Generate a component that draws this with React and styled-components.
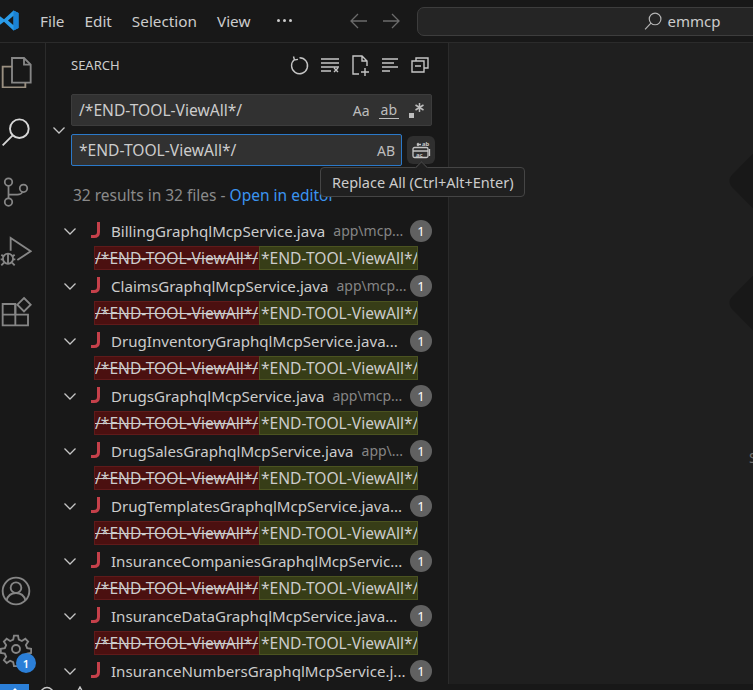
import React from "react";
import styled, { createGlobalStyle } from "styled-components";

const files = [
  { name: "BillingGraphqlMcpService.java", path: "app\\mcp..." },
  { name: "ClaimsGraphqlMcpService.java", path: "app\\mcp..." },
  { name: "DrugInventoryGraphqlMcpService.java..." },
  { name: "DrugsGraphqlMcpService.java", path: "app\\mcp..." },
  { name: "DrugSalesGraphqlMcpService.java", path: "app\\..." },
  { name: "DrugTemplatesGraphqlMcpService.java..." },
  { name: "InsuranceCompaniesGraphqlMcpServic..." },
  { name: "InsuranceDataGraphqlMcpService.java..." },
  { name: "InsuranceNumbersGraphqlMcpService.j..." },
];

const Global = createGlobalStyle`
  html, body {
    margin: 0;
    height: 100%;
    background: #181818;
  }
  #root {
    height: 100%;
  }
  * {
    box-sizing: border-box;
  }
`;

const Window = styled.div`
  height: 690px;
  display: flex;
  flex-direction: column;
  overflow: hidden;
  color: #cccccc;
  font-family: "Noto Sans", "Open Sans", sans-serif;
  font-size: 14px;
`;

const TitleBar = styled.div`
  height: 43px;
  flex-shrink: 0;
  display: flex;
  align-items: center;
  background: #181818;
  border-bottom: 1px solid #2b2b2b;

  & > * {
    flex-shrink: 0;
  }
`;

const Logo = styled.svg`
  width: 19px;
  height: 21px;
  margin-right: 21px;
  margin-top: -1px;
`;

const Menu = styled.div`
  font-size: 15.3px;
  margin-right: ${(p) => p.$gap}px;
`;

const MoreDots = styled.div`
  display: flex;
  gap: 3px;
  margin-right: 57px;
  margin-top: -2px;

  span {
    width: 3px;
    height: 3px;
    border-radius: 50%;
    background: #cccccc;
  }
`;

const NavIcon = styled.svg`
  width: 20px;
  height: 20px;
  margin-right: 12px;
  stroke: #6b6b6b;
  fill: none;
  stroke-width: 1.3;
`;

const CommandBox = styled.div`
  width: 528px;
  height: 29px;
  margin-left: 4px;
  display: flex;
  align-items: center;
  justify-content: center;
  gap: 5px;
  background: #252525;
  border: 1px solid #3d3d3d;
  border-radius: 7px;
  font-size: 15px;
`;

const Main = styled.div`
  flex: 1;
  min-height: 0;
  display: flex;
`;

const ActivityBar = styled.div`
  width: 46px;
  flex-shrink: 0;
  display: flex;
  flex-direction: column;
  justify-content: space-between;
  background: #181818;
  border-right: 1px solid #2b2b2b;
  padding: 0 0 6px;
`;

const ActivityGroup = styled.div`
  display: flex;
  flex-direction: column;
  margin-top: ${(p) => p.$offset || 0}px;
`;

const ActivityItem = styled.div`
  position: relative;
  width: 32px;
  height: ${(p) => p.$h || 60}px;
  display: flex;
  align-items: center;
  justify-content: center;
  color: ${(p) => (p.$active ? "#d7d7d7" : "#868686")};
`;

const Badge = styled.span`
  position: absolute;
  left: 16px;
  bottom: 5px;
  width: 20px;
  height: 20px;
  border-radius: 50%;
  background: #2b7fd8;
  color: #ffffff;
  font-size: 11px;
  font-weight: 600;
  display: flex;
  align-items: center;
  justify-content: center;
`;

const Sidebar = styled.div`
  width: 403px;
  flex-shrink: 0;
  position: relative;
  z-index: 1;
  display: flex;
  flex-direction: column;
  background: #181818;
  border-right: 1px solid #2b2b2b;
`;

const Header = styled.div`
  height: 44px;
  display: flex;
  align-items: center;
  padding: 0 17px 0 25px;
`;

const Title = styled.div`
  flex: 1;
  font-size: 13px;
`;

const HeaderActions = styled.div`
  display: flex;
  align-items: center;
  gap: 8px;
`;

const ActionIcon = styled.svg`
  width: 22px;
  height: 22px;
  fill: none;
  stroke: #c5c5c5;
  stroke-width: 1.4;
`;

const Form = styled.div`
  margin-top: 7px;
  display: flex;
`;

const Toggle = styled.div`
  width: 25px;
  display: flex;
  align-items: center;
  justify-content: center;
  padding-left: 1px;
`;

const Chevron = styled.svg`
  width: 14px;
  height: 14px;
  flex-shrink: 0;
  fill: none;
  stroke: #c5c5c5;
  stroke-width: 1.3;
`;

const Inputs = styled.div`
  display: flex;
  flex-direction: column;
  gap: 8px;
`;

const InputRow = styled.div`
  display: flex;
  align-items: center;
  gap: 5px;
`;

const Field = styled.div`
  width: ${(p) => p.$w}px;
  height: 32px;
  display: flex;
  align-items: center;
  padding: 0 5px 0 7px;
  background: #313131;
  border: 1px solid ${(p) => (p.$focus ? "#2b79c9" : "#3c3c3c")};
  border-radius: 2px;
`;

const FieldText = styled.div`
  flex: 1;
  font-size: 15.6px;
`;

const FieldOption = styled.span`
  font-size: 14px;
  color: #bdbdbd;
  margin-left: ${(p) => p.$gap || 0}px;
  margin-right: ${(p) => p.$right || 0}px;
  padding: ${(p) => (p.$under ? "0 2px" : "0")};
  line-height: ${(p) => (p.$under ? "16px" : "normal")};
  border-bottom: ${(p) => (p.$under ? "1.5px solid #bdbdbd" : "none")};
`;

const RegexIcon = styled.svg`
  width: 17px;
  height: 17px;
  margin-left: 9px;
  margin-right: 1px;
  fill: none;
  stroke: #bdbdbd;
  stroke-width: 1.5;
`;

const ReplaceButton = styled.div`
  width: 28px;
  height: 28px;
  display: flex;
  align-items: center;
  justify-content: center;
  background: #2f2f2f;
  border-radius: 6px;
`;

const Results = styled.div`
  margin: 18px 0 0 27px;
  height: 24px;
  font-size: 15.5px;
  color: #8a8a8a;
  white-space: nowrap;
`;

const Link = styled.span`
  color: #3b94f0;
`;

const Tooltip = styled.div`
  position: absolute;
  left: 274px;
  top: 124px;
  height: 30px;
  width: 205px;
  display: flex;
  align-items: center;
  padding-left: 11px;
  background: #202020;
  border: 1px solid #454545;
  border-radius: 4px;
  font-size: 14.5px;
  white-space: nowrap;

  &::before {
    content: "";
    position: absolute;
    left: 96px;
    top: -5px;
    width: 8px;
    height: 8px;
    background: #202020;
    border-left: 1px solid #454545;
    border-top: 1px solid #454545;
    transform: rotate(45deg);
  }
`;

const Tree = styled.div`
  flex: 1;
  min-height: 0;
  overflow: hidden;
  margin-top: 9px;
`;

const FileRow = styled.div`
  height: 27.5px;
  display: flex;
  align-items: center;
  padding: 0 16px 0 17px;
  white-space: nowrap;
`;

const JavaIcon = styled.svg`
  width: 14px;
  height: 20px;
  flex-shrink: 0;
  margin-left: 12px;
  margin-right: 8px;
  margin-top: -2px;
  fill: none;
  stroke: #c5404a;
  stroke-width: 3;
`;

const FileName = styled.span`
  font-size: 15.1px;
`;

const FilePath = styled.span`
  margin-left: 8px;
  font-size: 14px;
  color: #858585;
`;

const Count = styled.span`
  margin-left: auto;
  width: 22px;
  height: 22px;
  flex-shrink: 0;
  border-radius: 50%;
  background: #616161;
  color: #ffffff;
  font-size: 13px;
  display: flex;
  align-items: center;
  justify-content: center;
`;

const MatchRow = styled.div`
  height: 27.5px;
  display: flex;
  align-items: center;
  padding-left: 48px;
  white-space: nowrap;
  font-size: 15.6px;
`;

const Removed = styled.span`
  width: 165px;
  height: 24px;
  line-height: 22px;
  background: #4b1010;
  border: 1px solid #5f1a1a;
  border-width: 1px 0 1px 1px;
  text-decoration: line-through;
  overflow: hidden;
`;

const Added = styled.span`
  width: 159px;
  height: 24px;
  line-height: 22px;
  padding-left: 1px;
  background: #373d17;
  border: 1px solid #4b5320;
  overflow: hidden;
`;

const Editor = styled.div`
  flex: 1;
  position: relative;
  overflow: hidden;
  background: #1f1f1f;
`;

const Diamond = styled.div`
  position: absolute;
  left: 290px;
  top: ${(p) => p.$top}px;
  width: 64px;
  height: 64px;
  background: #181818;
  border-radius: 9px;
  transform: rotate(45deg);
`;

const Hint = styled.div`
  position: absolute;
  left: 300px;
  top: 405px;
  font-size: 14px;
  color: #6f6f6f;
`;

const StatusBar = styled.div`
  height: 6px;
  flex-shrink: 0;
  display: flex;
  overflow: hidden;
  background: #181818;
  color: #c8c8c8;
`;

const Remote = styled.div`
  width: 29px;
  display: flex;
  justify-content: center;
  background: #2b7fd8;
  color: #ffffff;
  margin-right: 10px;
`;

const StatusIcon = styled.svg`
  width: 16px;
  height: 16px;
  margin-right: 17px;
  margin-top: 2px;
  flex-shrink: 0;
  fill: none;
  stroke: currentColor;
  stroke-width: 1.4;
`;

function CommandIcon({ children, size = 22, ...rest }) {
  return (
    <svg width={size} height={size} viewBox="0 0 24 24" fill="none" stroke="currentColor" strokeWidth="1.4" {...rest}>
      {children}
    </svg>
  );
}

export default function App() {
  return (
    <Window>
      <Global />
      <TitleBar>
        <Logo viewBox="0 0 19 21">
          <path d="M13.5 0.5 L18.5 3 V18 L13.5 20.5 L4 11.8 L-1 15.5 V5.5 L4 9.2 Z" fill="#2a9be8" />
          <path d="M13.5 5.8 L8 10.5 L13.5 15.2 Z" fill="#181818" />
          <path d="M13.5 0.5 L18.5 3 V18 L13.5 20.5 Z" fill="#1a82d4" />
        </Logo>
        <Menu $gap={20}>File</Menu>
        <Menu $gap={20}>Edit</Menu>
        <Menu $gap={20}>Selection</Menu>
        <Menu $gap={27}>View</Menu>
        <MoreDots><span /><span /><span /></MoreDots>
        <NavIcon viewBox="0 0 20 20"><path d="M18 10H2M9 3l-7 7 7 7" /></NavIcon>
        <NavIcon viewBox="0 0 20 20"><path d="M2 10h16M11 3l7 7-7 7" /></NavIcon>
        <CommandBox>
          <CommandIcon size={20} style={{ color: "#b5b5b5" }}>
            <circle cx="14.5" cy="9.5" r="7" />
            <path d="M9.5 14.5 2.5 22" />
          </CommandIcon>
          emmcp
        </CommandBox>
      </TitleBar>
      <Main>
        <ActivityBar>
          <ActivityGroup $offset={-1}>
            <ActivityItem>
              <CommandIcon size={32}>
                <path d="M9 1.5h9l5 5v13.5H9z" />
                <path d="M18 1.5v5h5" />
                <path d="M9 8H2v15.5h17V20" stroke="#9a8f80" />
              </CommandIcon>
            </ActivityItem>
            <ActivityItem $active>
              <CommandIcon size={34}>
                <circle cx="14.5" cy="9.5" r="7" />
                <path d="M9.5 14.5 2 22" />
              </CommandIcon>
            </ActivityItem>
            <ActivityItem>
              <CommandIcon size={30}>
                <circle cx="6" cy="4" r="3" />
                <circle cx="6" cy="20" r="3" />
                <circle cx="18" cy="9" r="3" />
                <path d="M6 7v10M6 14h7c2 0 4-1 4-2.5" />
              </CommandIcon>
            </ActivityItem>
            <ActivityItem>
              <CommandIcon size={34}>
                <path d="M8 11V1.5L23 11.5 13 18" />
                <circle cx="6" cy="17" r="3.8" />
                <path d="M6 13v8M1 14l2 1.5M11 14l-2 1.5M0.5 17.5h2M11.5 17.5h-2M1 22l2-2M11 22l-2-2" />
              </CommandIcon>
            </ActivityItem>
            <ActivityItem>
              <CommandIcon size={32}>
                <path d="M2 6h9.5v16H2zM2 14h19v8h-9.5" />
                <path d="M11.5 14V6" />
                <path d="M18 1.5 23 6.5 18 11.5 13 6.5z" />
              </CommandIcon>
            </ActivityItem>
          </ActivityGroup>
          <ActivityGroup>
            <ActivityItem $h={58}>
              <CommandIcon size={36}>
                <circle cx="12" cy="12" r="10" />
                <circle cx="12" cy="9.5" r="4" />
                <path d="M5 19c1-4 4-5.5 7-5.5s6 1.5 7 5.5" />
              </CommandIcon>
            </ActivityItem>
            <ActivityItem $h={58}>
              <CommandIcon size={36}>
                <circle cx="12" cy="12" r="3" />
                <path d="M10.5 2h3l.6 3 2.3 1 2.6-1.7 2.1 2.1-1.7 2.6 1 2.3 3 .6v3l-3 .6-1 2.3 1.7 2.6-2.1 2.1-2.6-1.7-2.3 1-.6 3h-3l-.6-3-2.3-1-2.6 1.7-2.1-2.1 1.7-2.6-1-2.3-3-.6v-3l3-.6 1-2.3-1.7-2.6 2.1-2.1 2.6 1.7 2.3-1z" />
              </CommandIcon>
              <Badge>1</Badge>
            </ActivityItem>
          </ActivityGroup>
        </ActivityBar>
        <Sidebar>
          <Header>
            <Title>SEARCH</Title>
            <HeaderActions>
              <ActionIcon viewBox="0 0 22 22"><path d="M5.5 5.5a8 8 0 1 0 5-1.8M4.5 2.5l1 3.5 3.5-.6" /></ActionIcon>
              <ActionIcon viewBox="0 0 22 22"><path d="M2 5h18M2 9h18M2 13h18M2 17h10M15 14l4 4M19 14l-4 4" /></ActionIcon>
              <ActionIcon viewBox="0 0 22 22"><path d="M10 20H4V2h9l5 5v5M13 2v5h5M16 14v8M12 18h8" /></ActionIcon>
              <ActionIcon viewBox="0 0 22 22"><path d="M3 5h16M3 9h12M3 13h16M3 17h8" /></ActionIcon>
              <ActionIcon viewBox="0 0 22 22"><path d="M7 7V4h12v10h-4M3 7h12v11H3zM6 12h6" /></ActionIcon>
            </HeaderActions>
          </Header>
          <Form>
            <Toggle>
              <Chevron viewBox="0 0 14 14"><path d="M1.5 4.5 7 10l5.5-5.5" /></Chevron>
            </Toggle>
            <Inputs>
              <Field $w={361}>
                <FieldText>/*END-TOOL-ViewAll*/</FieldText>
                <FieldOption>Aa</FieldOption>
                <FieldOption $gap={9} $under>ab</FieldOption>
                <RegexIcon viewBox="0 0 17 17">
                  <rect x="1" y="11" width="5" height="5" fill="#bdbdbd" stroke="none" />
                  <path d="M11.5 1v9M7.5 3l8 5M15.5 3l-8 5" />
                </RegexIcon>
              </Field>
              <InputRow>
                <Field $w={331} $focus>
                  <FieldText>*END-TOOL-ViewAll*/</FieldText>
                  <FieldOption $right={1}>AB</FieldOption>
                </Field>
                <ReplaceButton>
                  <svg width="20" height="20" viewBox="0 0 20 20" fill="none" stroke="#c5c5c5" strokeWidth="1.3">
                    <rect x="2" y="7.5" width="15" height="10" rx="1.5" />
                    <path d="M2 11h15M18.5 9v7M6 4.5h4M6 4.5l1.5-1.5M6 4.5l1.5 1.5" />
                    <text x="11" y="6" fontSize="6" fill="#c5c5c5" stroke="none" fontWeight="700">ab</text>
                    <text x="5" y="16.5" fontSize="6" fill="#c5c5c5" stroke="none" fontWeight="700">ac</text>
                  </svg>
                </ReplaceButton>
              </InputRow>
            </Inputs>
          </Form>
          <Results>
            32 results in 32 files - <Link>Open in editor</Link>
          </Results>
          <Tree>
            {files.map((f, i) => (
              <React.Fragment key={f.name}>
                <FileRow>
                  <Chevron viewBox="0 0 14 14"><path d="M1.5 4.5 7 10l5.5-5.5" /></Chevron>
                  <JavaIcon viewBox="0 0 14 20"><path d="M9.5 2v10c0 3-2 4.5-4.5 4.5H2" /></JavaIcon>
                  <FileName>{f.name}</FileName>
                  {f.path && <FilePath>{f.path}</FilePath>}
                  <Count>1</Count>
                </FileRow>
                {i < files.length - 1 && (
                  <MatchRow>
                    <Removed>/*END-TOOL-ViewAll*/</Removed>
                    <Added>*END-TOOL-ViewAll*/</Added>
                  </MatchRow>
                )}
              </React.Fragment>
            ))}
          </Tree>
          <Tooltip>Replace All (Ctrl+Alt+Enter)</Tooltip>
        </Sidebar>
        <Editor>
          <Diamond $top={106} />
          <Diamond $top={228} />
          <Hint>S</Hint>
        </Editor>
      </Main>
      <StatusBar>
        <Remote>
          <StatusIcon viewBox="0 0 16 16" style={{ margin: "2px 0 0" }}><path d="M3 8l5-5 5 5" /></StatusIcon>
        </Remote>
        <StatusIcon viewBox="0 0 16 16"><circle cx="8" cy="8" r="6.5" /></StatusIcon>
        <StatusIcon viewBox="0 0 16 16"><path d="M8 1 15 14H1z" /></StatusIcon>
      </StatusBar>
    </Window>
  );
}
